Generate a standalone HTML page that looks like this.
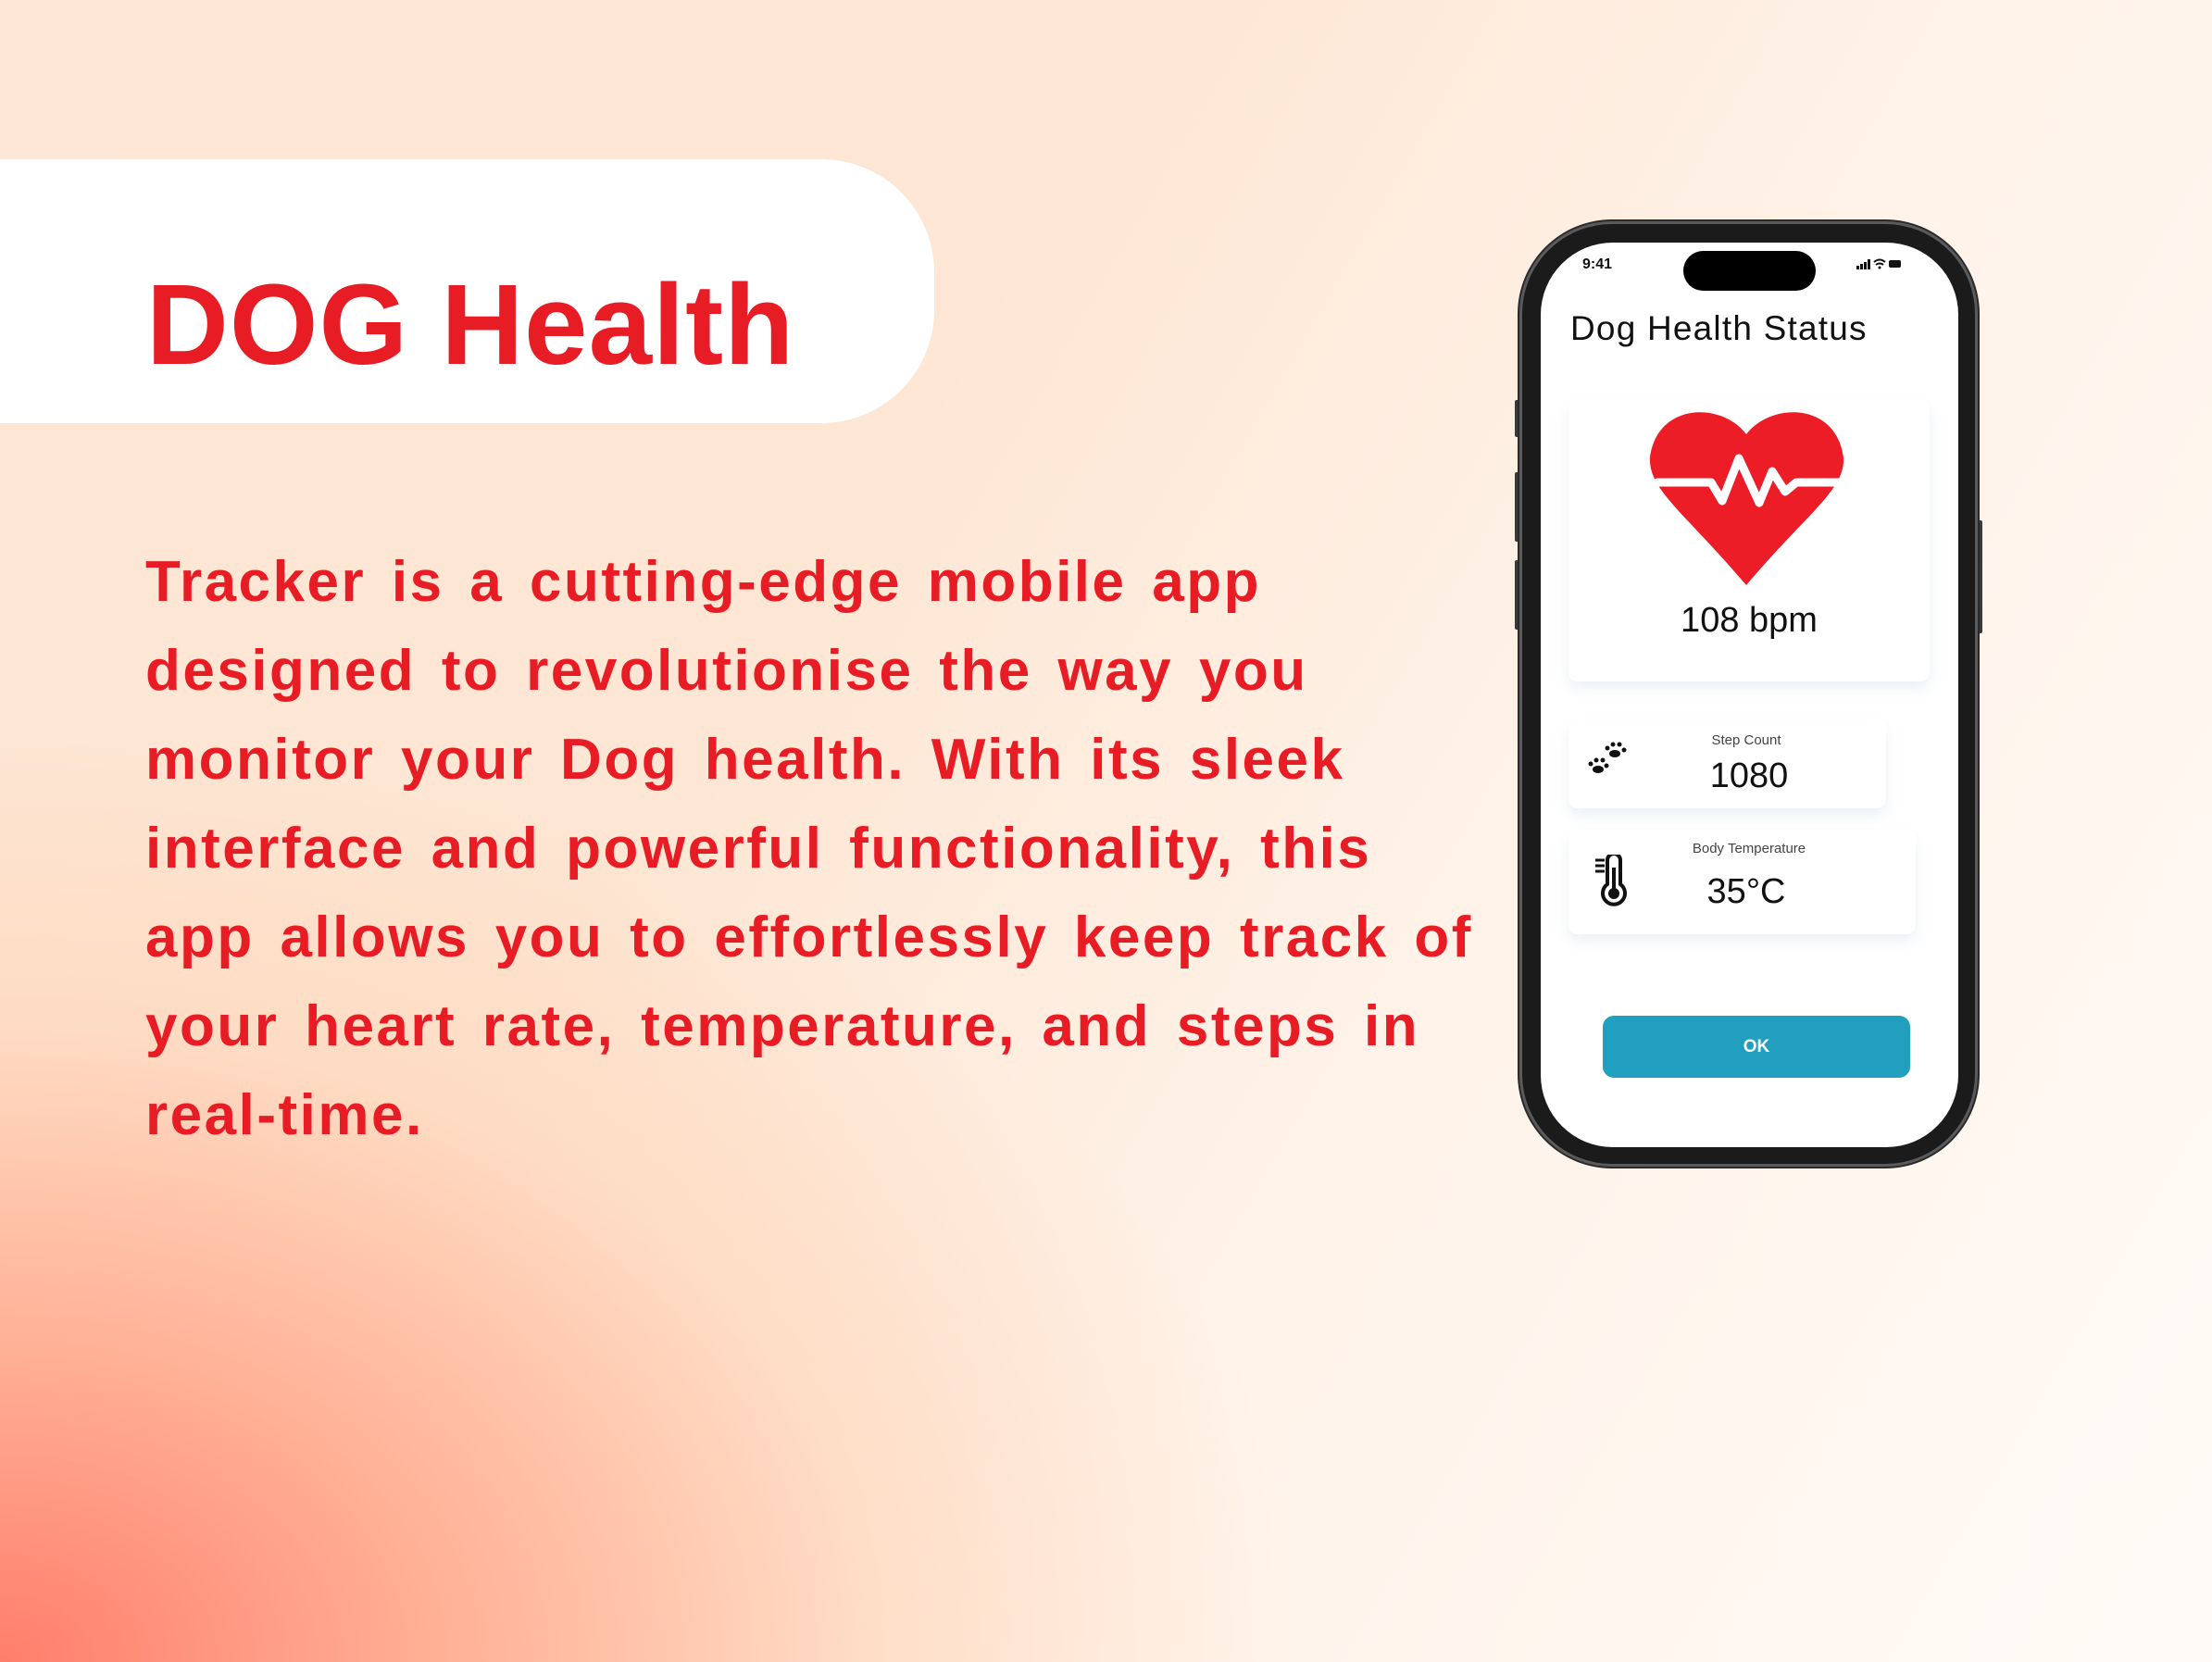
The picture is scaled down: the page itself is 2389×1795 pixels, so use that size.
<!DOCTYPE html>
<html><head><meta charset="utf-8">
<style>
*{margin:0;padding:0;box-sizing:border-box}
html,body{width:2389px;height:1795px;overflow:hidden}
body{position:relative;font-family:"Liberation Sans",sans-serif;
background:
radial-gradient(ellipse 1600px 1150px at 0px 1795px,#ff7e6c 0%,#ffb196 30%,rgba(255,214,186,0.65) 60%,rgba(255,230,210,0) 88%),
linear-gradient(120deg,#fde6d5 0%,#fde6d3 35%,#fff3ea 65%,#fffaf6 100%);}
.abs{position:absolute}
.pill{left:0;top:172px;width:1009px;height:285px;background:#fff;border-radius:0 122px 122px 0}
.title{left:158px;top:290px;font-size:123px;font-weight:bold;color:#e81c24;line-height:1;letter-spacing:1px}
.para{left:157px;top:581px;font-size:62px;font-weight:bold;color:#e81c24;line-height:96px;white-space:nowrap;letter-spacing:2.5px;word-spacing:8px}
.phone{left:1641px;top:239px;width:495px;height:1021px;border-radius:100px;background:#1b1b1b;border:3px solid #5a5a5a;box-shadow:0 0 0 2px #2a2a2a}
.screen{left:1664px;top:262px;width:451px;height:977px;border-radius:78px;background:#fff;overflow:hidden}
.btnside{background:#3a3a3a;width:5px;border-radius:2px}
.card{background:#fff;border-radius:10px;box-shadow:0 8px 14px rgba(200,215,225,0.35)}
.c{text-align:center;transform:translateX(-50%);white-space:nowrap}
</style></head><body>
<div class="abs pill"></div>
<div class="abs title">DOG Health</div>
<div class="abs para">Tracker is a cutting-edge mobile app<br>designed to revolutionise the way you<br>monitor your Dog health. With its sleek<br>interface and powerful functionality, this<br>app allows you to effortlessly keep track of<br>your heart rate, temperature, and steps in<br>real-time.</div>

<div class="abs btnside" style="left:1636px;top:432px;height:40px"></div>
<div class="abs btnside" style="left:1636px;top:510px;height:75px"></div>
<div class="abs btnside" style="left:1636px;top:605px;height:75px"></div>
<div class="abs btnside" style="left:2136px;top:562px;height:122px"></div>
<div class="abs phone"></div>
<div class="abs screen"></div>

<div class="abs" style="left:1709px;top:277px;font-size:16px;font-weight:bold;color:#111">9:41</div>
<div class="abs" style="left:1818px;top:271px;width:143px;height:43px;background:#000;border-radius:22px"></div>
<svg class="abs" style="left:2005px;top:278px" width="50" height="14" viewBox="0 0 50 14">
<rect x="0" y="9" width="3" height="4" fill="#111"/><rect x="4" y="7" width="3" height="6" fill="#111"/><rect x="8" y="5" width="3" height="8" fill="#111"/><rect x="12" y="2" width="3" height="11" fill="#111"/>
<path d="M19 5 Q25 0 31 5 M21 8 Q25 5 29 8" stroke="#111" stroke-width="2" fill="none"/><circle cx="25" cy="11" r="1.5" fill="#111"/>
<rect x="35" y="3" width="13" height="8" rx="2" fill="#111"/></svg>

<div class="abs" style="left:1696px;top:334px;font-size:37px;color:#111;letter-spacing:1.2px">Dog Health Status</div>

<div class="abs card" style="left:1694px;top:431px;width:390px;height:305px"></div>
<svg class="abs" style="left:1780px;top:439px" width="213" height="195" viewBox="0 0 213 195">
<path d="M106 30 C80 -5 10 -5 2 55 C0 90 40 115 106 193 C172 115 213 90 211 55 C203 -5 133 -5 106 30 Z" fill="#ec1d27"/>
<path d="M10 82 L68 82 L80 102 L98 56 L120 104 L134 70 L148 92 L160 82 L206 82" stroke="#fff" stroke-width="9" fill="none" stroke-linejoin="round" stroke-linecap="round"/>
</svg>
<div class="abs c" style="left:1889px;top:649px;font-size:38px;color:#111">108 bpm</div>

<div class="abs card" style="left:1694px;top:777px;width:343px;height:96px"></div>
<svg class="abs" style="left:1714px;top:800px" width="44" height="40" viewBox="0 0 44 40">
<g fill="#111"><ellipse cx="30" cy="14" rx="6" ry="4"/><circle cx="22" cy="8" r="2.5"/><circle cx="28" cy="4" r="2.5"/><circle cx="35" cy="4" r="2.5"/><circle cx="40" cy="10" r="2.5"/>
<ellipse cx="12" cy="31" rx="6" ry="4"/><circle cx="4" cy="25" r="2.5"/><circle cx="10" cy="21" r="2.5"/><circle cx="17" cy="21" r="2.5"/><circle cx="21" cy="27" r="2.5"/></g></svg>
<div class="abs c" style="left:1886px;top:791px;font-size:15px;color:#444">Step Count</div>
<div class="abs c" style="left:1889px;top:817px;font-size:38px;color:#111">1080</div>

<div class="abs card" style="left:1694px;top:896px;width:375px;height:113px"></div>
<svg class="abs" style="left:1721px;top:923px" width="40" height="56" viewBox="0 0 40 56">
<path d="M15 6 a7 7 0 0 1 14 0 v26 a12 12 0 1 1 -14 0 Z" stroke="#111" stroke-width="4" fill="none"/>
<circle cx="22" cy="42" r="6" fill="#111"/><rect x="20" y="14" width="4" height="26" fill="#111"/>
<path d="M2 6 h10 M2 12 h10 M2 18 h10" stroke="#111" stroke-width="3"/></svg>
<div class="abs c" style="left:1889px;top:908px;font-size:15px;color:#444">Body Temperature</div>
<div class="abs c" style="left:1886px;top:942px;font-size:38px;color:#111">35°C</div>

<div class="abs" style="left:1731px;top:1097px;width:332px;height:67px;background:#229fbe;border-radius:12px;color:#fff;font-weight:bold;font-size:19px;text-align:center;line-height:67px">OK</div>
</body></html>
